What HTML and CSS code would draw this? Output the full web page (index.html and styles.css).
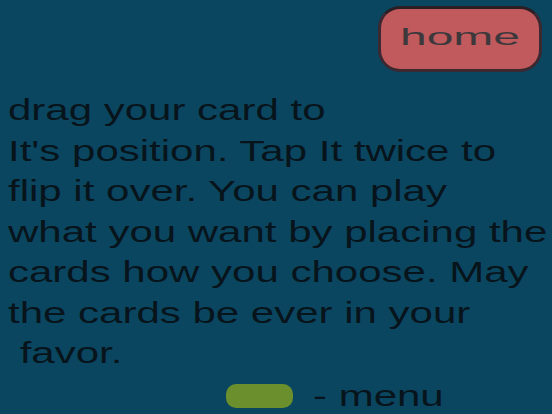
FILE: index.html
```html
<!DOCTYPE html>
<html>
<head>
<meta charset="utf-8">
<link rel="stylesheet" href="styles.css">
</head>
<body>
<div class="screen">
  <div class="topbar">
    <div class="home-btn"><span class="home-label">home</span></div>
  </div>
  <div class="instructions">
    <div class="line"><span class="wide">drag your card to</span></div>
    <div class="line"><span class="wide">It's position. Tap It twice to</span></div>
    <div class="line"><span class="wide">flip it over. You can play</span></div>
    <div class="line"><span class="wide">what you want by placing the</span></div>
    <div class="line"><span class="wide">cards how you choose. May</span></div>
    <div class="line"><span class="wide">the cards be ever in your</span></div>
    <div class="line"><span class="wide">&nbsp;favor.</span></div>
  </div>
  <div class="legend">
    <div class="menu-swatch"></div>
    <span class="wide legend-text">- menu</span>
  </div>
</div>
</body>
</html>
```

FILE: styles.css
```css
html, body {
  margin: 0;
  padding: 0;
  background: #0b4660;
}
.screen {
  width: 552px;
  height: 414px;
  overflow: hidden;
  font-family: "Liberation Sans", Arial, sans-serif;
  color: #07141b;
}
.topbar {
  display: flex;
  justify-content: flex-end;
  padding: 6px 10px 0 0;
  height: 90px;
  box-sizing: border-box;
}
.home-btn {
  width: 164px;
  height: 66px;
  box-sizing: border-box;
  background: #c05a5c;
  border: 3px solid #3b2830;
  border-top-color: #2a1e24;
  border-radius: 22px;
  display: flex;
  align-items: center;
  justify-content: center;
}
.home-label {
  display: inline-block;
  font-size: 24px;
  color: #3c383c;
  transform: scaleX(2);
  margin-top: -4px;
}
.instructions {
  padding-left: 8px;
}
.line {
  height: 40.5px;
  line-height: 40.5px;
  font-size: 30px;
  white-space: nowrap;
}
.wide {
  display: inline-block;
  transform: scaleX(1.4);
  transform-origin: left center;
}
.legend {
  display: flex;
  align-items: center;
  padding-left: 226px;
  margin-top: 7px;
  height: 30px;
}
.menu-swatch {
  width: 67px;
  height: 24px;
  border-radius: 10px;
  background: #6b8f2c;
}
.legend-text {
  font-size: 30px;
  line-height: 30px;
  margin-left: 20px;
}
```
